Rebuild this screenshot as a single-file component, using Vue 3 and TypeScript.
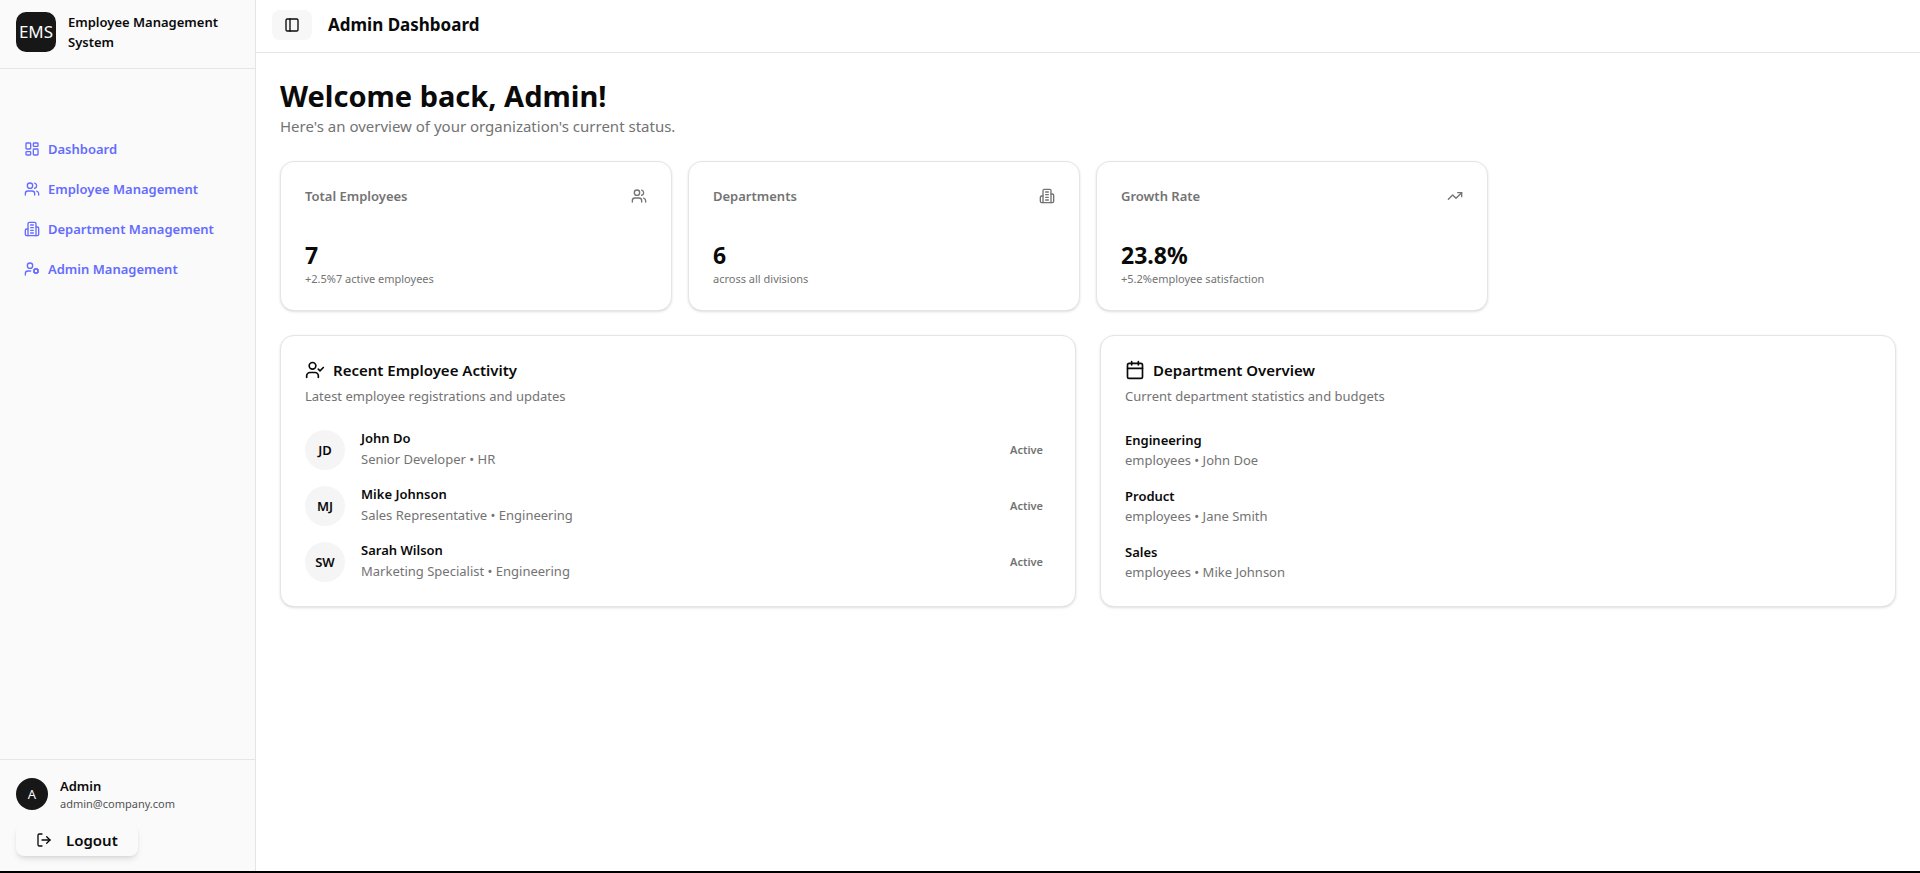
<script setup lang="ts">
type Shape = { tag: 'path' | 'circle' | 'rect'; attrs: Record<string, string | number> }

const path = (d: string): Shape => ({ tag: 'path', attrs: { d } })
const circle = (cx: number, cy: number, r: number): Shape => ({ tag: 'circle', attrs: { cx, cy, r } })
const rect = (x: number, y: number, width: number, height: number, rx: number): Shape => ({
  tag: 'rect',
  attrs: { x, y, width, height, rx },
})

const icons: Record<string, Shape[]> = {
  panel: [rect(3, 3, 18, 18, 2), path('M9 3v18')],
  dashboard: [rect(3, 3, 7, 9, 1), rect(14, 3, 7, 5, 1), rect(14, 12, 7, 9, 1), rect(3, 16, 7, 5, 1)],
  users: [
    path('M16 21v-2a4 4 0 0 0-4-4H6a4 4 0 0 0-4 4v2'),
    path('M16 3.128a4 4 0 0 1 0 7.744'),
    path('M22 21v-2a4 4 0 0 0-3-3.87'),
    circle(9, 7, 4),
  ],
  building: [
    path('M6 22V4a2 2 0 0 1 2-2h8a2 2 0 0 1 2 2v18Z'),
    path('M6 12H4a2 2 0 0 0-2 2v6a2 2 0 0 0 2 2h2'),
    path('M18 9h2a2 2 0 0 1 2 2v9a2 2 0 0 1-2 2h-2'),
    path('M10 6h4M10 10h4M10 14h4M10 18h4'),
  ],
  userCog: [
    path('M10 15H6a4 4 0 0 0-4 4v2'),
    path('m14.305 16.53.923-.382'),
    path('m15.228 13.852-.923-.383'),
    path('m16.852 12.228-.383-.923'),
    path('m16.852 17.772-.383.924'),
    path('m19.148 12.228.383-.923'),
    path('m19.53 18.696-.382-.924'),
    path('m20.772 13.852.924-.383'),
    path('m20.772 16.148.924.383'),
    circle(18, 15, 3),
    circle(9, 7, 4),
  ],
  trending: [path('M16 7h6v6'), path('m22 7-8.5 8.5-5-5L2 17')],
  userCheck: [path('m16 11 2 2 4-4'), path('M16 21v-2a4 4 0 0 0-4-4H6a4 4 0 0 0-4 4v2'), circle(9, 7, 4)],
  calendar: [path('M8 2v4'), path('M16 2v4'), rect(3, 4, 18, 18, 2), path('M3 10h18')],
  logout: [path('m16 17 5-5-5-5'), path('M21 12H9'), path('M9 21H5a2 2 0 0 1-2-2V5a2 2 0 0 1 2-2h4')],
}

const navItems = [
  { label: 'Dashboard', icon: 'dashboard' },
  { label: 'Employee Management', icon: 'users' },
  { label: 'Department Management', icon: 'building' },
  { label: 'Admin Management', icon: 'userCog' },
]

const stats = [
  { title: 'Total Employees', value: '7', trend: '+2.5%', note: '7 active employees', icon: 'users' },
  { title: 'Departments', value: '6', trend: '', note: 'across all divisions', icon: 'building' },
  { title: 'Growth Rate', value: '23.8%', trend: '+5.2%', note: 'employee satisfaction', icon: 'trending' },
]

const employees = [
  { initials: 'JD', name: 'John Do', role: 'Senior Developer', department: 'HR', status: 'Active' },
  { initials: 'MJ', name: 'Mike Johnson', role: 'Sales Representative', department: 'Engineering', status: 'Active' },
  { initials: 'SW', name: 'Sarah Wilson', role: 'Marketing Specialist', department: 'Engineering', status: 'Active' },
]

const departments = [
  { name: 'Engineering', manager: 'John Doe' },
  { name: 'Product', manager: 'Jane Smith' },
  { name: 'Sales', manager: 'Mike Johnson' },
]
</script>

<template>
  <div class="shell">
    <aside class="sidebar">
      <div class="brand">
        <div class="logo">EMS</div>
        <span class="brand-name">Employee Management System</span>
      </div>

      <nav class="nav" aria-label="Main">
        <a v-for="item in navItems" :key="item.label" href="#" class="nav-link">
          <svg class="icon" viewBox="0 0 24 24" aria-hidden="true">
            <component :is="s.tag" v-for="(s, i) in icons[item.icon]" :key="i" v-bind="s.attrs" />
          </svg>
          <span>{{ item.label }}</span>
        </a>
      </nav>

      <div class="account">
        <div class="profile">
          <div class="profile-avatar">A</div>
          <div>
            <div class="profile-name">Admin</div>
            <div class="profile-mail">admin@company.com</div>
          </div>
        </div>
        <button type="button" class="logout">
          <svg class="icon" viewBox="0 0 24 24" aria-hidden="true">
            <component :is="s.tag" v-for="(s, i) in icons.logout" :key="i" v-bind="s.attrs" />
          </svg>
          <span>Logout</span>
        </button>
      </div>
    </aside>

    <div class="page">
      <header class="topbar">
        <button type="button" class="toggle" aria-label="Toggle sidebar">
          <svg class="icon" viewBox="0 0 24 24" aria-hidden="true">
            <component :is="s.tag" v-for="(s, i) in icons.panel" :key="i" v-bind="s.attrs" />
          </svg>
        </button>
        <h1 class="topbar-title">Admin Dashboard</h1>
      </header>

      <main class="content">
        <div>
          <h2 class="welcome">Welcome back, Admin!</h2>
          <p class="lead">Here's an overview of your organization's current status.</p>
        </div>

        <section class="stats">
          <article v-for="stat in stats" :key="stat.title" class="card">
            <div class="stat-head">
              <h3 class="stat-title">{{ stat.title }}</h3>
              <svg class="icon" viewBox="0 0 24 24" aria-hidden="true">
                <component :is="s.tag" v-for="(s, i) in icons[stat.icon]" :key="i" v-bind="s.attrs" />
              </svg>
            </div>
            <div class="stat-value">{{ stat.value }}</div>
            <p class="stat-note"><span v-if="stat.trend">{{ stat.trend }}</span>{{ stat.note }}</p>
          </article>
        </section>

        <section class="panels">
          <article class="card">
            <h3 class="panel-title">
              <svg class="icon icon-lg" viewBox="0 0 24 24" aria-hidden="true">
                <component :is="s.tag" v-for="(s, i) in icons.userCheck" :key="i" v-bind="s.attrs" />
              </svg>
              <span>Recent Employee Activity</span>
            </h3>
            <p class="panel-note">Latest employee registrations and updates</p>
            <ul class="rows">
              <li v-for="person in employees" :key="person.name" class="row">
                <div class="avatar">{{ person.initials }}</div>
                <div class="person">
                  <p class="person-name">{{ person.name }}</p>
                  <p class="detail">{{ person.role }} • {{ person.department }}</p>
                </div>
                <span class="badge">{{ person.status }}</span>
              </li>
            </ul>
          </article>

          <article class="card">
            <h3 class="panel-title">
              <svg class="icon icon-lg" viewBox="0 0 24 24" aria-hidden="true">
                <component :is="s.tag" v-for="(s, i) in icons.calendar" :key="i" v-bind="s.attrs" />
              </svg>
              <span>Department Overview</span>
            </h3>
            <p class="panel-note">Current department statistics and budgets</p>
            <ul class="rows">
              <li v-for="dept in departments" :key="dept.name">
                <p class="dept-name">{{ dept.name }}</p>
                <p class="detail">employees • {{ dept.manager }}</p>
              </li>
            </ul>
          </article>
        </section>
      </main>
    </div>
  </div>
</template>

<style>
body {
  margin: 0;
  background: #ffffff;
}
</style>

<style scoped>
.shell,
.shell * {
  box-sizing: border-box;
}

.shell {
  display: flex;
  min-height: 100vh;
  border-bottom: 2px solid #000000;
  background: #ffffff;
  color: #0a0a0a;
  font-family: "Noto Sans", "Open Sans", sans-serif;
  font-size: 13px;
  line-height: 20px;
}

h1,
h2,
h3,
p,
ul {
  margin: 0;
  padding: 0;
}

ul {
  list-style: none;
}

button {
  font-family: inherit;
  color: inherit;
  border: 0;
  cursor: pointer;
}

.icon {
  flex: none;
  width: 16px;
  height: 16px;
  fill: none;
  stroke: currentColor;
  stroke-width: 2;
  stroke-linecap: round;
  stroke-linejoin: round;
}

.icon-lg {
  width: 20px;
  height: 20px;
}

.sidebar {
  flex: none;
  display: flex;
  flex-direction: column;
  width: 256px;
  border-right: 1px solid #e5e5e5;
  background: #fafafa;
}

.brand {
  display: flex;
  align-items: center;
  gap: 12px;
  padding: 12px 16px 16px;
  border-bottom: 1px solid #e5e5e5;
}

.logo {
  flex: none;
  display: grid;
  place-items: center;
  width: 40px;
  height: 40px;
  border-radius: 10px;
  background: #171717;
  color: #fafafa;
  font-size: 17px;
}

.brand-name {
  font-weight: 600;
}

.nav {
  flex: 1;
  display: flex;
  flex-direction: column;
  gap: 8px;
  padding: 64px 16px 16px;
}

.nav-link {
  display: flex;
  align-items: center;
  gap: 8px;
  height: 32px;
  padding: 0 8px;
  color: #646cff;
  font-weight: 600;
  text-decoration: none;
}

.account {
  padding: 16px 16px 15px;
  border-top: 1px solid #e5e5e5;
}

.profile {
  display: flex;
  align-items: center;
  gap: 12px;
}

.profile-avatar {
  display: grid;
  place-items: center;
  width: 32px;
  height: 32px;
  border-radius: 50%;
  background: #171717;
  color: #fafafa;
  font-size: 13px;
}

.profile-name {
  font-weight: 600;
}

.profile-mail {
  color: #525252;
  font-size: 11px;
  line-height: 16px;
}

.logout {
  display: flex;
  align-items: center;
  gap: 14px;
  height: 32px;
  margin-top: 12px;
  padding: 0 20px;
  border-radius: 8px;
  background: #fafafa;
  box-shadow: 0 4px 6px -1px rgb(0 0 0 / 10%), 0 2px 4px -2px rgb(0 0 0 / 10%);
  font-size: 15px;
  font-weight: 600;
}

.page {
  flex: 1;
  min-width: 0;
}

.topbar {
  display: flex;
  align-items: center;
  gap: 16px;
  padding: 10px 16px 12px;
  border-bottom: 1px solid #e5e5e5;
}

.toggle {
  display: grid;
  place-items: center;
  width: 40px;
  height: 30px;
  padding: 0;
  border-radius: 8px;
  background: #f7f7f7;
}

.topbar-title {
  font-size: 17px;
  font-weight: 700;
  line-height: 28px;
}

.content {
  display: flex;
  flex-direction: column;
  gap: 24px;
  padding: 24px;
}

.welcome {
  font-size: 29px;
  font-weight: 700;
  line-height: 38px;
}

.lead {
  color: #737373;
  font-size: 15px;
  line-height: 22px;
}

.stats {
  display: grid;
  grid-template-columns: repeat(4, minmax(0, 1fr));
  gap: 16px;
}

.panels {
  display: grid;
  grid-template-columns: repeat(2, minmax(0, 1fr));
  gap: 24px;
}

.card {
  padding: 24px;
  border: 1px solid #e5e5e5;
  border-radius: 14px;
  background: #ffffff;
  box-shadow: 0 1px 3px rgb(0 0 0 / 10%), 0 1px 2px -1px rgb(0 0 0 / 10%);
}

.stat-head {
  display: flex;
  align-items: center;
  justify-content: space-between;
  color: #737373;
}

.stat-title {
  font-size: 13px;
  font-weight: 600;
}

.stat-value {
  margin-top: 32px;
  font-size: 23px;
  font-weight: 700;
  line-height: 34px;
}

.stat-note {
  color: #737373;
  font-size: 11px;
  line-height: 14px;
}

.panel-title {
  display: flex;
  align-items: center;
  gap: 8px;
  font-size: 15px;
  font-weight: 600;
  line-height: 20px;
}

.panel-note {
  margin-top: 6px;
  color: #737373;
}

.rows {
  display: flex;
  flex-direction: column;
  gap: 16px;
  margin-top: 24px;
}

.row {
  display: flex;
  align-items: center;
  gap: 16px;
}

.avatar {
  display: grid;
  place-items: center;
  width: 40px;
  height: 40px;
  border-radius: 50%;
  background: #f5f5f5;
  font-weight: 600;
}

.person {
  flex: 1;
}

.person-name {
  margin-bottom: 4px;
  font-weight: 600;
  line-height: 14px;
}

.dept-name {
  font-weight: 600;
}

.detail {
  color: #737373;
}

.badge {
  padding: 2px 8px;
  color: #737373;
  font-size: 11px;
  font-weight: 600;
  line-height: 16px;
}
</style>
